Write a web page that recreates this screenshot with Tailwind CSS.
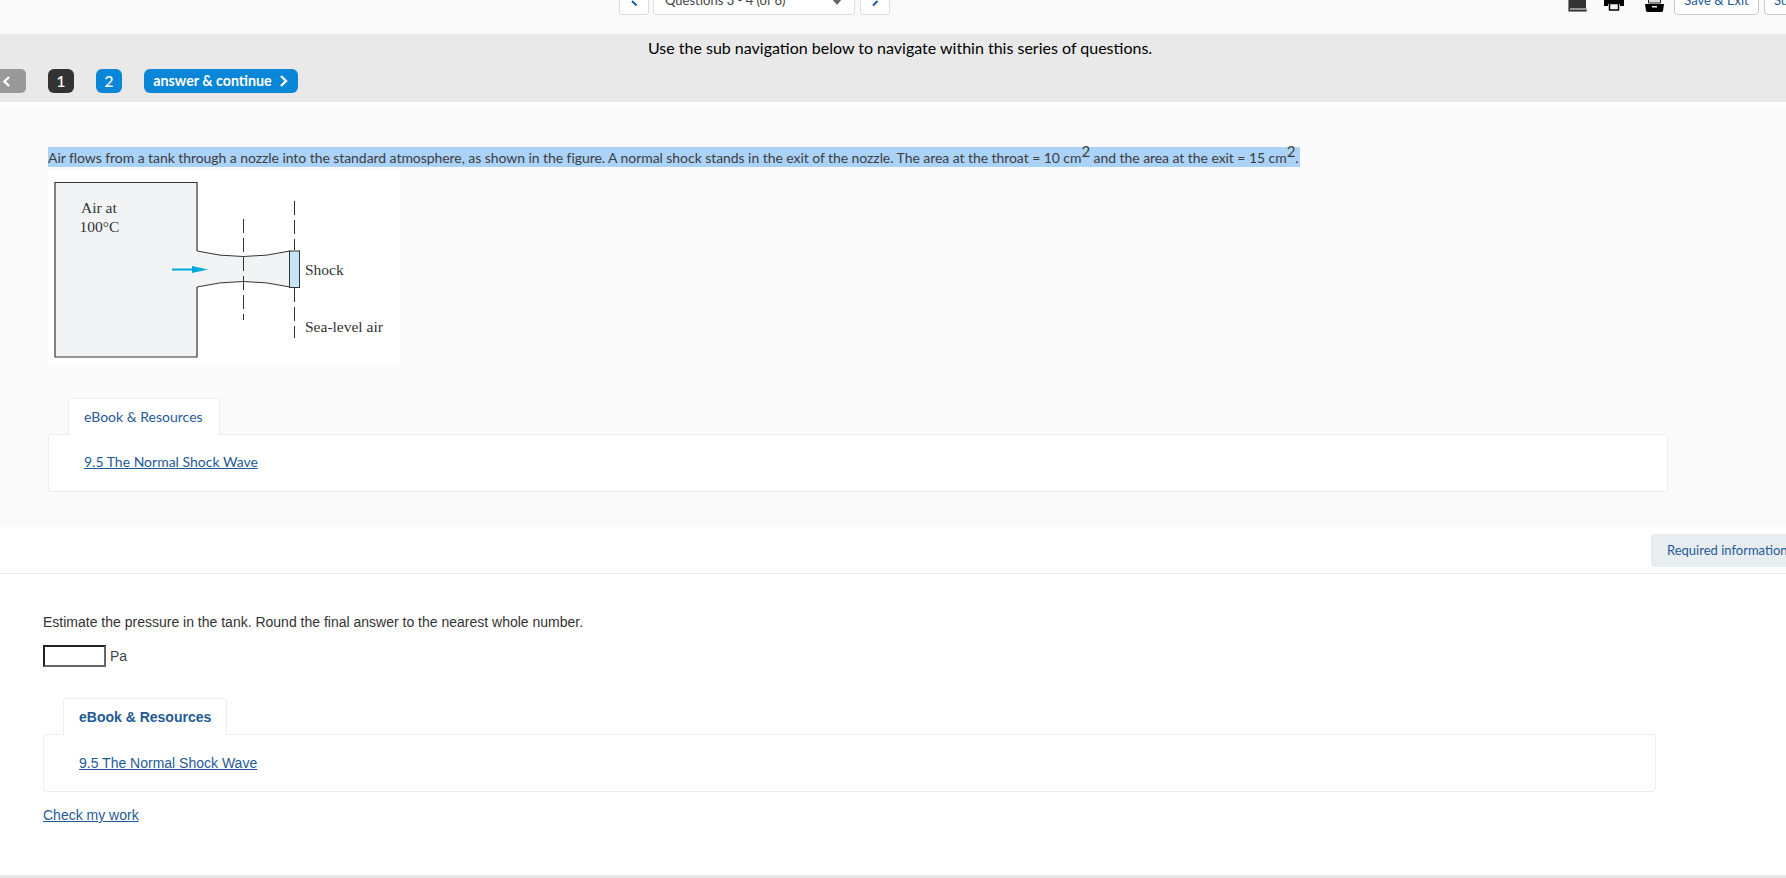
<!DOCTYPE html>
<html lang="en">
<head>
    <meta charset="UTF-8">
    <title>Required information</title>
    <script src="https://cdn.jsdelivr.net/npm/@tailwindcss/browser@4"></script>
</head>
<body class="bg-white font-['Lato',sans-serif] h-[878px] overflow-hidden">

    <!-- top bar, scrolled so only its bottom edge shows -->
    <header class="h-[34px] bg-[#fafafa] flex items-end pb-[19px] pl-[619px] overflow-hidden">
        <button class="w-[30px] h-[30px] bg-white border border-[#dcdcdc] rounded-b-[3px] flex items-end justify-center pb-[4px] shrink-0">
            <svg width="9" height="10" viewBox="0 0 9 10" fill="none" stroke="#1f5a96" stroke-width="2"><path d="M2 1L6.500 5.500"/></svg>
        </button>
        <div class="w-[202px] h-[30px] ml-[4px] bg-white border border-[#dcdcdc] rounded-b-[3px] flex items-end justify-between pl-[11px] pr-[12px] pb-[4px] shrink-0 text-[13px] leading-[20px] text-[#444]">
            <span>Questions 3 - 4 (of 6)</span>
            <span class="w-0 h-0 mb-[5px] border-x-[5px] border-x-transparent border-t-[6px] border-t-[#666]"></span>
        </div>
        <button class="w-[30px] h-[30px] ml-[5px] bg-white border border-[#dcdcdc] rounded-b-[3px] flex items-end justify-center pb-[4px] shrink-0">
            <svg width="9" height="10" viewBox="0 0 9 10" fill="none" stroke="#1f5a96" stroke-width="2"><path d="M6.500 1L2 5.500"/></svg>
        </button>

        <!-- tool icons -->
        <svg class="ml-[678px] mb-[3px] shrink-0" width="19" height="14" viewBox="0 0 19 14"><path d="M0 0H18V10.500H2V11.500H18V14H2Q0 14 0 12Z" fill="#333"/><path d="M0.500 0V12Q0.500 13.500 2 13.500H18.500V10.500" fill="none" stroke="#8a8a8a"/></svg>
        <svg class="ml-[17px] mb-[4px] shrink-0" width="20" height="12" viewBox="0 0 20 12"><path d="M0 0H20V7H16V4H4V7H0Z" fill="#000"/><path d="M4 0H16V5H4Z" fill="#000"/><path d="M5.500 4.500H14.500V11H5.500Z" fill="#f4f4f4" stroke="#000" stroke-width="1.500"/></svg>
        <svg class="ml-[21px] mb-[3px] shrink-0" width="19" height="13" viewBox="0 0 19 13"><path d="M3.500 0.500H15.500V4H3.500Z" fill="#ddd" stroke="#222"/><path d="M0 5H19L18 12Q18 13 16 13H3Q1 13 1 12Z" fill="#000"/><path d="M7 7H12V8.500H7Z" fill="#eee"/></svg>

        <a class="w-[85px] h-[30px] ml-[10px] bg-white border border-[#c9c9c9] rounded-b-[4px] flex items-end justify-center pb-[4px] shrink-0 text-[13px] leading-[20px] text-[#1f5a96]">Save &amp; Exit</a>
        <a class="w-[60px] h-[30px] ml-[5px] bg-white border border-[#c9c9c9] rounded-b-[4px] flex items-end pl-[9px] pb-[4px] shrink-0 text-[13px] leading-[20px] text-[#1f5a96]">Submit</a>
    </header>

    <!-- sub navigation -->
    <nav class="h-[68px] bg-[#e9e9e9] flex flex-col">
        <p class="text-center text-[16px] leading-[20px] text-black mt-[4px] pl-[14px]">Use the sub navigation below to navigate within this series of questions.</p>
        <div class="flex items-center mt-[11px]">
            <button class="w-[26px] h-[24px] bg-[#999] rounded-r-[5px] flex items-center justify-start pl-[2px]">
                <svg width="9" height="11" viewBox="0 0 9 11" fill="none" stroke="white" stroke-width="2.400"><path d="M7 1L2.500 5.500L7 10"/></svg>
            </button>
            <span class="w-[26px] h-[24px] ml-[22px] bg-[#333] rounded-[6px] text-white text-[16px] font-medium flex items-center justify-center">1</span>
            <span class="w-[26px] h-[24px] ml-[22px] bg-[#0a86d8] rounded-[6px] text-white text-[16px] font-medium flex items-center justify-center">2</span>
            <a class="w-[154px] h-[24px] ml-[22px] bg-[#0a86d8] rounded-[6px] text-white text-[14.250px] font-bold flex items-center justify-center gap-[6px]">answer &amp; continue
                <svg width="11" height="12" viewBox="0 0 11 12" fill="none" stroke="white" stroke-width="2.400"><path d="M3 1L8 6L3 11"/></svg>
            </a>
        </div>
    </nav>

    <!-- shared question stem -->
    <section class="mt-[5px] h-[420px] bg-[#fafafa] pt-[40px] pl-[48px] pr-[118px]">
        <p class="w-max h-[20px] pr-[1px] bg-[#abd3fa] text-[14px] leading-[21px] tracking-[-0.06px] text-[#3d3d3d] whitespace-nowrap">Air flows from a tank through a nozzle into the standard atmosphere, as shown in the figure. A normal shock stands in the exit of the nozzle. The area at the throat = 10 cm<sup class="text-[15px] leading-[0] align-baseline top-[-6px]">2</sup> and the area at the exit = 15 cm<sup class="text-[15px] leading-[0] align-baseline top-[-6px]">2</sup>.</p>

        <!-- nozzle figure -->
        <svg class="block mt-[3px] bg-white" width="352" height="197" viewBox="48 170 352 197">
            <path d="M197 251V182.500H55V357H197V287Q243 276 289 287V251Q243 262 197 251Z" fill="#f2f3f5"/>
            <path d="M197 251V182.500H55V357H197V287" fill="none" stroke="#333" stroke-width="1.200"/>
            <path d="M197 251Q243 262 290 251M197 287Q243 276 290 287" fill="none" stroke="#333" stroke-width="1"/>
            <rect x="289.500" y="251" width="10" height="36.500" fill="#c6e6f8" stroke="#333" stroke-width="1"/>
            <path d="M243.500 219V320" stroke="#333" stroke-dasharray="14 5" fill="none"/>
            <path d="M294.500 201V250M294.500 288V338" stroke="#333" stroke-dasharray="14 5" fill="none"/>
            <path d="M172 269.500H200" stroke="#00a9dc" stroke-width="2"/>
            <path d="M192 266L208 269.500L192 273Z" fill="#00a9dc"/>
            <g font-family="Liberation Serif" font-size="15.500" fill="#333">
                <text x="81" y="213">Air at</text>
                <text x="79.500" y="232">100°C</text>
                <text x="305" y="275">Shock</text>
                <text x="305" y="332">Sea-level air</text>
            </g>
        </svg>

        <div class="mt-[31px] ml-[20px] w-[152px] h-[37px] relative z-10 bg-white border border-[#eeeeee] border-b-0 rounded-t-[3px] pl-[15px] pt-[8px] text-[14px] leading-[20px] text-[#1f5a96]">eBook &amp; Resources</div>
        <div class="h-[58px] -mt-[1px] bg-white border border-[#eeeeee] rounded-[3px] pl-[35px] pt-[17px] text-[14px] leading-[20px] text-[#1f5a96] underline">9.5 The Normal Shock Wave</div>
    </section>

    <!-- part header -->
    <div class="h-[47px] border-b border-[#e9e9e9] pt-[7px] flex justify-end">
        <span class="w-[135px] h-[33px] bg-[#e8edf2] rounded-l-[3px] pl-[16px] pt-[6px] text-[13px] leading-[20px] text-[#1f5a96] whitespace-nowrap overflow-hidden">Required information</span>
    </div>

    <!-- question -->
    <main class="pl-[43px] pr-[130px] font-['Liberation_Sans',sans-serif] text-[14px] leading-[20px]">
        <p class="mt-[38px] text-[#333]">Estimate the pressure in the tank. Round the final answer to the nearest whole number.</p>
        <div class="mt-[13px] flex items-center">
            <input type="text" class="w-[63px] h-[22px] bg-white border-2 border-t-[#222] border-l-[#222] border-r-[#666] border-b-[#666]">
            <span class="ml-[4px] text-[#444]">Pa</span>
        </div>
        <div class="mt-[31px] ml-[20px] w-[164px] h-[37px] relative z-10 bg-white border border-[#eeeeee] border-b-0 rounded-t-[3px] pl-[15px] pt-[8px] font-bold text-[#1f5a96]">eBook &amp; Resources</div>
        <div class="h-[58px] -mt-[1px] bg-white border border-[#eeeeee] rounded-[3px] pl-[35px] pt-[18px] text-[#1f5a96] underline">9.5 The Normal Shock Wave</div>
        <a class="block mt-[13px] w-max text-[#1f5a96] underline">Check my work</a>
    </main>

    <div class="fixed bottom-0 left-0 w-full h-[3px] bg-[#e6e6e6]"></div>
</body>
</html>
